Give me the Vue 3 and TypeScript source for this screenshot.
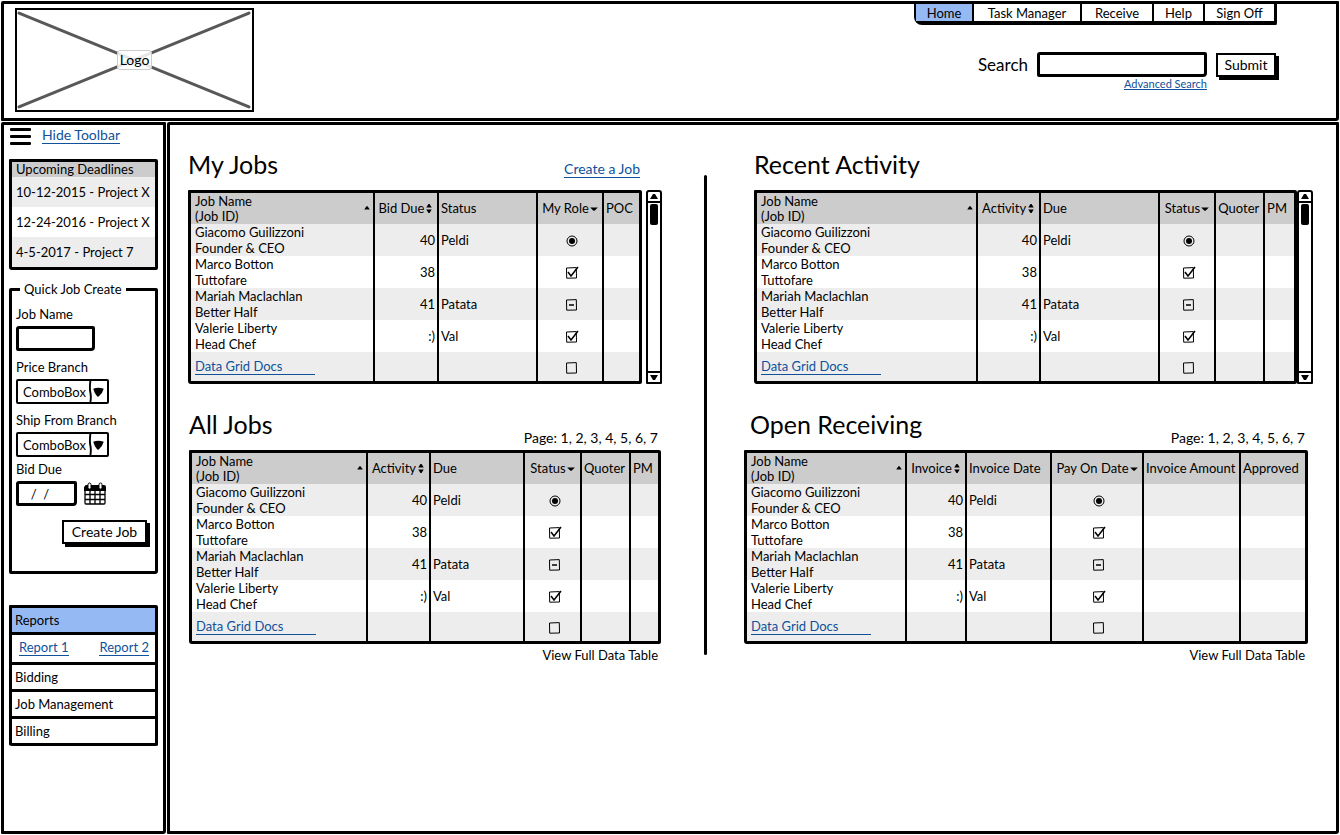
<script setup lang="ts">
import { computed, ref } from 'vue'

type Sort = 'asc' | 'both' | 'desc'
interface Column { label: string; width: number; kind: 'name' | 'count' | 'text' | 'mark' | 'empty'; sort?: Sort }
interface Panel { id: string; title: string; scroll: boolean; paged: boolean; action?: string; columns: Column[] }
interface Row { name: string; role: string; count: string; text: string; mark: string }

const nav = ['Home', 'Task Manager', 'Receive', 'Help', 'Sign Off']
const deadlines = ['10-12-2015 - Project X', '12-24-2016 - Project X', '4-5-2017 - Project 7']
const sections = ['Bidding', 'Job Management', 'Billing']
const pages = 'Page: 1, 2, 3, 4, 5, 6, 7'

const rows: Row[] = [
  { name: 'Giacomo Guilizzoni', role: 'Founder & CEO', count: '40', text: 'Peldi', mark: 'radio' },
  { name: 'Marco Botton', role: 'Tuttofare', count: '38', text: '', mark: 'checked' },
  { name: 'Mariah Maclachlan', role: 'Better Half', count: '41', text: 'Patata', mark: 'mixed' },
  { name: 'Valerie Liberty', role: 'Head Chef', count: ':)', text: 'Val', mark: 'checked' },
  { name: '', role: '', count: '', text: '', mark: 'blank' },
]

const activityColumns = (name: number, due: number, pm: number): Column[] => [
  { label: 'Job Name', width: name, kind: 'name', sort: 'asc' },
  { label: 'Activity', width: 63, kind: 'count', sort: 'both' },
  { label: 'Due', width: due, kind: 'text' },
  { label: 'Status', width: 57, kind: 'mark', sort: 'desc' },
  { label: 'Quoter', width: 49, kind: 'empty' },
  { label: 'PM', width: pm, kind: 'empty' },
]

const leftPanels: Panel[] = [
  {
    id: 'my-jobs', title: 'My Jobs', scroll: true, paged: false, action: 'Create a Job',
    columns: [
      { label: 'Job Name', width: 182, kind: 'name', sort: 'asc' },
      { label: 'Bid Due', width: 64, kind: 'count', sort: 'both' },
      { label: 'Status', width: 99, kind: 'text' },
      { label: 'My Role', width: 66, kind: 'mark', sort: 'desc' },
      { label: 'POC', width: 37, kind: 'empty' },
    ],
  },
  { id: 'all-jobs', title: 'All Jobs', scroll: false, paged: true, columns: activityColumns(174, 94, 29) },
]
const rightPanels: Panel[] = [
  { id: 'recent', title: 'Recent Activity', scroll: true, paged: false, columns: activityColumns(220, 119, 31) },
  {
    id: 'receiving', title: 'Open Receiving', scroll: false, paged: true,
    columns: [
      { label: 'Job Name', width: 158, kind: 'name', sort: 'asc' },
      { label: 'Invoice', width: 60, kind: 'count', sort: 'both' },
      { label: 'Invoice Date', width: 85, kind: 'text' },
      { label: 'Pay On Date', width: 92, kind: 'mark', sort: 'desc' },
      { label: 'Invoice Amount', width: 97, kind: 'empty' },
      { label: 'Approved', width: 66, kind: 'empty' },
    ],
  },
]
const groups = computed(() => [leftPanels, rightPanels])

const share = (panel: Panel, column: Column) =>
  `${(column.width / panel.columns.reduce((sum, c) => sum + c.width, 0)) * 100}%`

const sortShapes: Record<Sort, string> = {
  asc: 'M1 6 L3 3 L4 3 L6 6 Z',
  both: 'M1 4 L3 1 L4 1 L6 4 Z M1 6 L6 6 L4 9 L3 9 Z',
  desc: 'M0 4 L7 4 L4 7 L3 7 Z',
}

const jobName = ref('')
const bidDue = ref('  /  /')
const query = ref('')
</script>

<template>
  <div class="page">
    <header class="top frame">
      <div class="logo">
        <svg viewBox="0 0 234 99" preserveAspectRatio="none" aria-hidden="true">
          <path d="M2 3 L231 96 M231 3 L2 96" />
        </svg>
        <span>Logo</span>
      </div>
      <div class="tools">
        <nav class="menu">
          <a v-for="(item, i) in nav" :key="item" href="#" :class="{ current: i === 0 }">{{ item }}</a>
        </nav>
        <form class="search" @submit.prevent>
          <label for="search">Search</label>
          <input id="search" v-model="query" class="box" type="text">
          <button class="button" type="submit">Submit</button>
          <a class="advanced link" href="#">Advanced Search</a>
        </form>
      </div>
    </header>

    <div class="body">
      <aside class="side frame">
        <div class="toggle">
          <button type="button" class="burger" aria-label="Toggle toolbar"><i></i><i></i><i></i></button>
          <a href="#" class="link">Hide Toolbar</a>
        </div>

        <section class="deadlines">
          <h2>Upcoming Deadlines</h2>
          <ul>
            <li v-for="item in deadlines" :key="item"><span>{{ item }}</span></li>
          </ul>
        </section>

        <fieldset class="quick">
          <legend>Quick Job Create</legend>
          <div class="field">
            <label for="job">Job Name</label>
            <input id="job" v-model="jobName" class="box job" type="text">
          </div>
          <div v-for="name in ['Price Branch', 'Ship From Branch']" :key="name" class="field">
            <label :for="name">{{ name }}</label>
            <div class="combo">
              <select :id="name"><option>ComboBox</option></select>
              <svg viewBox="0 0 18 22" aria-hidden="true">
                <path d="M1 0 Q0 8 1 12 Q2 17 1 22" fill="none" stroke="#000" stroke-width="2" />
                <path d="M4 8 Q9 6 15 8 Q14 12 10 16 Q9 17 8 16 Q5 12 4 8 Z" />
              </svg>
            </div>
          </div>
          <div class="field due">
            <label for="due">Bid Due</label>
            <div class="date">
              <input id="due" v-model="bidDue" class="box" type="text">
              <button type="button" class="calendar" aria-label="Pick a date">
                <svg viewBox="0 0 22 24" aria-hidden="true">
                  <path d="M1 4 Q1 3 2 3 L20 3 Q22 3 22 5 L22 9 L0 9 L0 5 Z" />
                  <path d="M1 8 V21 Q1 22 2 22 H20 Q21 22 21 21 V8 M1 12.500 H21 M1 17.500 H21 M6 8 V22 M11 8 V22 M16 8 V22" fill="none" stroke="#000" stroke-width="1.300" />
                  <rect x="4" y="1" width="3" height="6" rx="1.500" fill="#fff" stroke="#000" />
                  <rect x="15" y="1" width="3" height="6" rx="1.500" fill="#fff" stroke="#000" />
                </svg>
              </button>
            </div>
          </div>
          <button type="button" class="button create">Create Job</button>
        </fieldset>

        <div class="accordion">
          <button type="button" class="open">Reports</button>
          <div class="reports">
            <a href="#" class="link">Report 1</a>
            <a href="#" class="link">Report 2</a>
          </div>
          <button v-for="item in sections" :key="item" type="button">{{ item }}</button>
        </div>
      </aside>

      <main class="main frame">
        <template v-for="(group, g) in groups" :key="g">
          <div v-if="g === 1" class="divider"></div>
          <div class="group" :class="g === 0 ? 'left' : 'right'">
            <section v-for="panel in group" :key="panel.id" class="panel" :class="panel.id">
              <div class="heading">
                <h1>{{ panel.title }}</h1>
                <a v-if="panel.action" href="#" class="link">{{ panel.action }}</a>
                <span v-if="panel.paged">{{ pages }}</span>
              </div>
              <div class="sheet">
                <table>
                  <colgroup>
                    <col v-for="column in panel.columns" :key="column.label" :style="{ width: share(panel, column) }">
                  </colgroup>
                  <thead>
                    <tr>
                      <th v-for="column in panel.columns" :key="column.label" :class="column.kind" scope="col">
                        <div>
                          <span>{{ column.label }}<template v-if="column.kind === 'name'"><br>(Job ID)</template></span>
                          <svg v-if="column.sort" viewBox="0 0 7 10" aria-hidden="true"><path :d="sortShapes[column.sort]" /></svg>
                        </div>
                      </th>
                    </tr>
                  </thead>
                  <tbody>
                    <tr v-for="(row, r) in rows" :key="r">
                      <td v-for="column in panel.columns" :key="column.label" :class="column.kind">
                        <template v-if="column.kind === 'name'">
                          <template v-if="row.name">{{ row.name }}<br>{{ row.role }}</template>
                          <a v-else href="#" class="docs">Data Grid Docs</a>
                        </template>
                        <template v-else-if="column.kind === 'count'">{{ row.count }}</template>
                        <template v-else-if="column.kind === 'text'">{{ row.text }}</template>
                        <label v-else-if="column.kind === 'mark'" class="tick">
                          <input
                            :type="row.mark === 'radio' ? 'radio' : 'checkbox'"
                            :checked="row.mark === 'radio' || row.mark === 'checked'"
                            :indeterminate="row.mark === 'mixed'"
                            :aria-label="column.label"
                          >
                          <svg viewBox="0 0 14 14" aria-hidden="true">
                            <template v-if="row.mark === 'radio'">
                              <circle cx="7" cy="7" r="5" class="line" />
                              <circle cx="7" cy="7" r="3" />
                            </template>
                            <template v-else>
                              <path d="M1.500 2 L11.300 1.600 L11.500 12 L1.700 12.200 Z" class="line" />
                              <path v-if="row.mark === 'checked'" d="M3 6 L6 10 L13 1" class="line heavy" />
                              <path v-if="row.mark === 'mixed'" d="M4 7 H9" class="line heavy" />
                            </template>
                          </svg>
                        </label>
                      </td>
                    </tr>
                  </tbody>
                </table>
                <div v-if="panel.scroll" class="scroller">
                  <button type="button" aria-label="Scroll up"><svg viewBox="0 0 12 9"><path d="M2 7 L5 2 L7 2 L10 7 Z" /></svg></button>
                  <div class="track"><i></i></div>
                  <button type="button" aria-label="Scroll down"><svg viewBox="0 0 12 9"><path d="M2 2 L10 2 L7 7 L5 7 Z" /></svg></button>
                </div>
              </div>
              <p v-if="panel.paged">View Full Data Table</p>
            </section>
          </div>
        </template>
      </main>
    </div>
  </div>
</template>

<style>
body {
  background: #fff;
}
</style>

<style scoped>
.page,
.page * {
  box-sizing: border-box;
}
.page {
  display: flex;
  flex-direction: column;
  gap: 1px;
  min-height: 100vh;
  padding: 1px;
  color: #000;
  font: 13px/16px Lato, "Open Sans", sans-serif;
}
button,
input,
select {
  margin: 0;
  padding: 0;
  border: 0;
  background: none;
  color: inherit;
  font: inherit;
}
h1,
h2,
p,
ul {
  margin: 0;
  padding: 0;
  font-weight: 400;
  list-style: none;
}
a {
  color: inherit;
  text-decoration: none;
}
svg {
  display: block;
}
.frame {
  border: 3px solid #000;
  border-radius: 2px 1px 3px 1px;
}
.link {
  border-bottom: 1px solid #10519a;
  color: #10519a;
}
.box {
  height: 25px;
  border: 3px solid #000;
  border-radius: 3px 2px 4px 2px;
}
.button {
  height: 24px;
  border: 2px solid #000;
  background: #fff;
  box-shadow: 3px 3px 0 #000;
  font-size: 14px;
}

.top {
  display: flex;
  justify-content: space-between;
  padding: 4px 59px 6px 11px;
}
.logo {
  display: grid;
  place-items: center;
  width: 239px;
  height: 104px;
  border: 2px solid #000;
}
.logo > * {
  grid-area: 1 / 1;
}
.logo svg {
  width: 100%;
  height: 100%;
  fill: none;
  stroke: #585858;
  stroke-width: 3;
  stroke-linecap: round;
}
.logo span {
  z-index: 1;
  padding: 1px 2px;
  border: 1px solid #ccc;
  border-radius: 3px;
  background: rgba(255, 255, 255, 0.85);
  font-size: 14px;
}
.tools {
  display: flex;
  flex-direction: column;
  align-items: flex-end;
  gap: 27px;
  margin-top: -4px;
}
.menu {
  display: grid;
  grid-template-columns: 58px 108px 72px 51px 69px;
  border: solid #000;
  border-width: 0 3px 4px 2px;
  border-radius: 0 0 2px 8px;
}
.menu a {
  padding-top: 1px;
  border-right: 2px solid #000;
  text-align: center;
}
.menu a:last-child {
  border: 0;
}
.menu .current {
  background: #95baf3;
}
.search {
  display: grid;
  grid-template-columns: auto 170px 60px;
  gap: 2px 9px;
  align-items: center;
  padding-right: 1px;
}
.search label {
  font-size: 17px;
}
.advanced {
  grid-column: 2;
  justify-self: end;
  font-size: 11px;
  line-height: 10px;
}

.body {
  display: flex;
  flex: 1;
  gap: 1px;
}
.side {
  flex: none;
  width: 165px;
  padding: 2px 5px;
}
.toggle {
  display: flex;
  align-items: flex-start;
  gap: 11px;
  padding: 0 1px;
  font-size: 14px;
}
.burger {
  display: grid;
  gap: 4px;
  width: 21px;
  padding-top: 1px;
}
.burger i {
  height: 3px;
  border-radius: 1px;
  background: #000;
}
.deadlines {
  margin-top: 14px;
  border: 3px solid #000;
  border-radius: 1px 2px 2px 3px;
}
.deadlines h2 {
  height: 15px;
  padding-left: 4px;
  background: #ccc;
  font-size: 13px;
  line-height: 14px;
}
.deadlines li {
  padding: 0 4px;
  line-height: 30px;
}
.deadlines li:nth-child(odd) {
  background: #ededed;
}
.deadlines span {
  display: block;
  white-space: nowrap;
}
.quick {
  min-width: 0;
  margin: 11px 0 0;
  padding: 9px 4px 27px;
  border: 3px solid #000;
  border-radius: 2px 2px 3px 2px;
}
.quick legend {
  margin-left: 4px;
  padding: 0 4px;
  white-space: nowrap;
}
.field {
  display: grid;
  gap: 4px;
  margin-bottom: 8px;
  white-space: nowrap;
}
.job {
  width: 79px;
}
.combo {
  display: grid;
  width: 93px;
  height: 25px;
  border: 2px solid #000;
  border-radius: 2px;
}
.combo > * {
  grid-area: 1 / 1;
}
.combo select {
  padding-left: 5px;
  appearance: none;
}
.combo svg {
  justify-self: end;
  width: 18px;
  height: 21px;
  pointer-events: none;
}
.due {
  margin-top: -4px;
}
.date {
  display: flex;
  gap: 7px;
}
.date .box {
  width: 61px;
  padding-left: 5px;
  white-space: pre;
}
.calendar svg {
  width: 22px;
  height: 24px;
}
.create {
  display: block;
  width: 85px;
  margin: 14px 4px 0 auto;
}
.accordion {
  margin-top: 31px;
  border: solid #000;
  border-width: 0 3px 3px;
  border-radius: 1px 2px 2px 3px;
}
.accordion button {
  display: block;
  width: 100%;
  height: 27px;
  padding-left: 3px;
  border-top: 3px solid #000;
  text-align: left;
}
.accordion .open {
  background: #95baf3;
}
.reports {
  display: flex;
  justify-content: space-between;
  height: 30px;
  padding: 4px 6px 0 7px;
  border-top: 3px solid #000;
}
.reports a {
  height: 17px;
}

.main {
  display: flex;
  flex: 1;
  align-items: flex-start;
  min-width: 0;
  padding: 23px 23px 0 18px;
}
.group {
  display: grid;
  gap: 24px;
  min-width: 0;
}
.left {
  flex: 474;
}
.right {
  flex: 569;
}
.divider {
  align-self: flex-start;
  width: 3px;
  height: 480px;
  margin: 27px 37px 0 42px;
  border-radius: 2px;
  background: #000;
}
.recent {
  padding-left: 10px;
}
.all-jobs {
  padding: 0 1px;
}
.receiving {
  padding-right: 5px;
}
.heading {
  display: flex;
  align-items: flex-end;
  justify-content: space-between;
  height: 42px;
  padding-bottom: 4px;
  font-size: 14px;
}
.my-jobs .heading {
  padding-right: 22px;
}
.receiving .heading {
  padding-left: 6px;
}
.heading h1 {
  align-self: flex-start;
  font-size: 25px;
  line-height: 32px;
}
.heading a {
  margin-bottom: 8px;
}
.heading span {
  padding-right: 3px;
}
.sheet {
  display: flex;
  gap: 4px;
}
.recent .sheet {
  gap: 0;
}
table {
  flex: 1;
  width: 100%;
  min-width: 0;
  border: 3px solid #000;
  border-radius: 1px 2px 2px 3px;
  border-spacing: 0;
  table-layout: fixed;
}
th,
td {
  height: 32px;
  padding: 0 2px;
  border-left: 2px solid #000;
  font-weight: 400;
  text-align: left;
  white-space: nowrap;
}
th {
  height: 31px;
  background: #ccc;
  line-height: 15px;
}
.name {
  padding-left: 4px;
  border-left: 0;
}
th div {
  display: flex;
  align-items: center;
  gap: 1px;
}
th svg {
  flex: none;
  width: 8px;
  height: 11px;
}
th.name div {
  justify-content: space-between;
}
th.count div,
th.mark div {
  justify-content: center;
}
td.count {
  text-align: right;
}
td.mark {
  padding-left: 6px;
  text-align: center;
}
tbody tr:nth-child(odd) {
  background: #ededed;
}
tbody tr:last-child td {
  height: 29px;
}
.docs {
  display: block;
  width: 120px;
  border-bottom: 1px solid #10519a;
  color: #10519a;
  line-height: 15px;
}
.tick {
  display: inline-grid;
  vertical-align: middle;
}
.tick > * {
  grid-area: 1 / 1;
  width: 14px;
  height: 14px;
}
.tick input {
  appearance: none;
}
.tick svg {
  pointer-events: none;
}
.line {
  fill: none;
  stroke: #000;
  stroke-width: 1;
}
.heavy {
  stroke-width: 1.5;
}
.scroller {
  display: flex;
  flex-direction: column;
  width: 16px;
  border: 2px solid #000;
  border-radius: 3px 3px 1px 1px;
}
.scroller svg {
  width: 12px;
  height: 9px;
}
.scroller button {
  height: 9px;
}
.track {
  flex: 1;
  padding: 1px 2px;
  border: solid #000;
  border-width: 2px 0;
}
.track i {
  display: block;
  height: 21px;
  border-radius: 2px;
  background: #000;
}
.panel p {
  padding: 3px 3px 0;
  font-size: 13px;
  text-align: right;
}
</style>
